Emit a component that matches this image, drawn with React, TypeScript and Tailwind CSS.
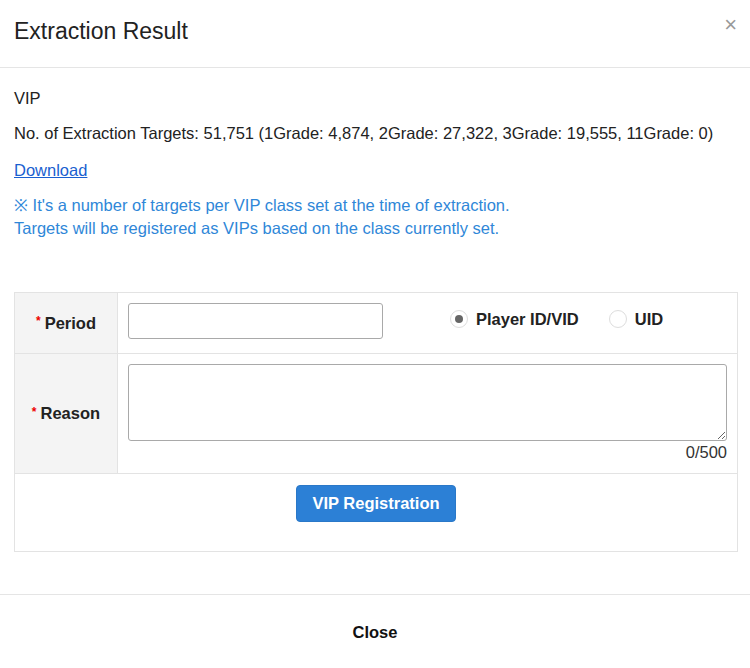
import React from "react";

export default function App() {
  return (
    <div className="w-[750px] h-[668px] bg-white text-[#222] flex flex-col" style={{ fontFamily: '"Liberation Sans", Arial, sans-serif' }}>
      {/* header */}
      <div className="h-[68px] border-b border-[#e5e5e5] flex items-center justify-between pl-[14px] pr-[13px] shrink-0">
        <h1 className="text-[23px] text-[#222] leading-none -mt-[4px]">Extraction Result</h1>
        <button className="text-[#999] text-[22px] leading-none -mt-[18px]">×</button>
      </div>

      {/* body */}
      <div className="flex-1 pl-[14px] pr-[12px] pt-[20px]">
        <p className="text-[16.5px] leading-[20px]">VIP</p>
        <p className="text-[16.5px] leading-[20px] mt-[15px]">
          No. of Extraction Targets: 51,751 (1Grade: 4,874, 2Grade: 27,322, 3Grade: 19,555, 11Grade: 0)
        </p>
        <a href="#" className="inline-block mt-[17px] text-[16.5px] leading-[20px] text-[#1a5fd0] underline">Download</a>
        <div className="mt-[11px] text-[16.5px] leading-[23px] text-[#2f87d8]">
          <p>※ It's a number of targets per VIP class set at the time of extraction.</p>
          <p>Targets will be registered as VIPs based on the class currently set.</p>
        </div>

        {/* registration form */}
        <div className="mt-[52px] border border-[#e3e3e3]">
          <div className="flex h-[61px] border-b border-[#e3e3e3]">
            <div className="w-[103px] bg-[#f4f4f4] border-r border-[#e3e3e3] flex items-center justify-center font-bold text-[16.5px]">
              <span className="text-[#e00] text-[12px] mr-[4px] -mt-[4px]">*</span>Period
            </div>
            <div className="flex-1 flex items-center pl-[10px] pr-[10px]">
              <input className="w-[255px] h-[36px] -mt-[4px] border border-[#a9a9a9] rounded-[3px] outline-none" />
              <div className="flex items-center ml-[67px] font-bold text-[16.5px] -mt-[8px]">
                <span className="w-[18px] h-[18px] rounded-full border border-[#ddd] bg-white flex items-center justify-center">
                  <span className="w-[8px] h-[8px] rounded-full bg-[#666]" />
                </span>
                <span className="ml-[8px]">Player ID/VID</span>
                <span className="ml-[30px] w-[18px] h-[18px] rounded-full border border-[#ddd] bg-white" />
                <span className="ml-[8px]">UID</span>
              </div>
            </div>
          </div>
          <div className="flex h-[120px] border-b border-[#e3e3e3]">
            <div className="w-[103px] bg-[#f4f4f4] border-r border-[#e3e3e3] flex items-center justify-center font-bold text-[16.5px]">
              <span className="text-[#e00] text-[12px] mr-[4px] -mt-[4px]">*</span>Reason
            </div>
            <div className="flex-1 pl-[10px] pr-[10px] pt-[10px]">
              <textarea className="block w-full h-[77px] border border-[#a9a9a9] rounded-[3px] outline-none resize-y" />
              <div className="text-right text-[16.5px] leading-[20px] mt-[1px] text-[#333]">0/500</div>
            </div>
          </div>
          <div className="h-[77px] flex justify-center pt-[11px]">
            <button className="w-[160px] h-[37px] bg-[#2c80d6] rounded-[4px] text-white font-bold text-[16.5px] border border-[#2a78c8]">
              VIP Registration
            </button>
          </div>
        </div>
      </div>

      {/* footer */}
      <div className="h-[74px] border-t border-[#e5e5e5] flex items-center justify-center shrink-0">
        <button className="font-bold text-[16.5px] text-[#111] mt-[2px]">Close</button>
      </div>
    </div>
  );
}
